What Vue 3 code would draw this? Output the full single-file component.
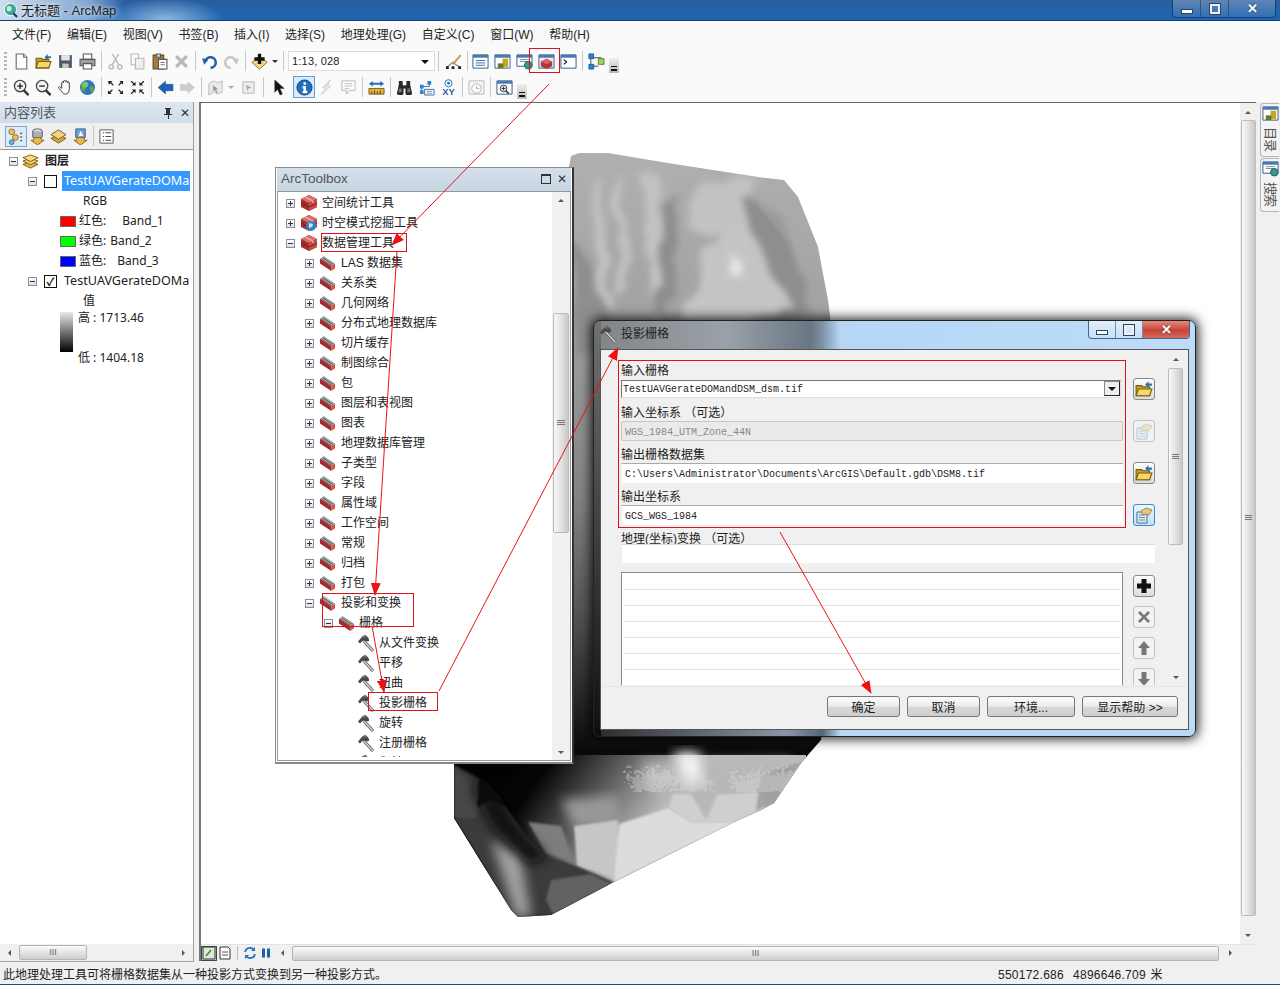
<script setup>
const toolbarOne = [
  { i: 'new', w: 22 }, { i: 'open', w: 22 }, { i: 'save', w: 22 }, { i: 'print', w: 22 }, { sep: 1 },
  { i: 'cut', w: 22, dim: 1 }, { i: 'copy', w: 22, dim: 1 }, { i: 'paste', w: 22 }, { i: 'del', w: 22, dim: 1 }, { sep: 1 },
  { i: 'undo', w: 22 }, { i: 'redo', w: 22, dim: 1 }, { sep: 1 },
  { i: 'add', w: 22 }, { dd: 1 }, { sep: 1 },
  { combo: '1:13, 028' }, { sep: 1 },
  { i: 'editor', w: 24 }, { sep: 1, w: 4 },
  { i: 'toc', w: 22 }, { i: 'catalog', w: 22 }, { i: 'search', w: 22 }, { i: 'toolbox', w: 22 }, { i: 'python', w: 22 }, { sep: 1 },
  { i: 'model', w: 22 }
]

const toolbarTwo = [
  { i: 'zoomin', w: 22 }, { i: 'zoomout', w: 22 }, { i: 'pan', w: 22 }, { i: 'globe', w: 22 }, { sep: 1 },
  { i: 'fixin', w: 22 }, { i: 'fixout', w: 22 }, { sep: 1 },
  { i: 'back', w: 22 }, { i: 'forward', w: 22, dim: 1 }, { sep: 1 },
  { i: 'select', w: 22, dim: 1 }, { dd: 1, dim: 1 }, { i: 'clear', w: 24, dim: 1 }, { sep: 1 },
  { i: 'pointer', w: 27 }, { i: 'identify', w: 22, on: 1 }, { i: 'bolt', w: 22, dim: 1 }, { i: 'html', w: 22, dim: 1 }, { sep: 1 },
  { i: 'measure', w: 22 }, { sep: 1 },
  { i: 'binoc', w: 22 }, { i: 'route', w: 22 }, { i: 'xy', w: 22 }, { sep: 1 },
  { i: 'clock', w: 22, dim: 1 }, { sep: 1 },
  { i: 'viewer', w: 22 }
]

const menus = ['文件(F)', '编辑(E)', '视图(V)', '书签(B)', '插入(I)', '选择(S)', '地理处理(G)', '自定义(C)', '窗口(W)', '帮助(H)']

const indent = [8, 27, 46, 80]
const toolRows = [
  { t: '空间统计工具', l: 0, x: '+' },
  { t: '时空模式挖掘工具', l: 0, x: '+', globe: 1 },
  { t: '数据管理工具', l: 0, x: '-' },
  ...['LAS 数据集', '关系类', '几何网络', '分布式地理数据库', '切片缓存', '制图综合', '包', '图层和表视图', '图表', '地理数据库管理', '子类型', '字段', '属性域', '工作空间', '常规', '归档', '打包']
    .map(t => ({ t, l: 1, x: '+' })),
  { t: '投影和变换', l: 1, x: '-' },
  { t: '栅格', l: 2, x: '-' },
  ...['从文件变换', '平移', '扭曲', '投影栅格', '旋转', '注册栅格', '翻转'].map(t => ({ t, l: 3 }))
]

const fields = [
  { label: '输入栅格', value: 'TestUAVGerateDOMandDSM_dsm.tif', kind: 'dropdown', btn: 'open' },
  { label: '输入坐标系 （可选）', value: 'WGS_1984_UTM_Zone_44N', kind: 'off', btn: 'sref', btnOff: 1 },
  { label: '输出栅格数据集', value: 'C:\\Users\\Administrator\\Documents\\ArcGIS\\Default.gdb\\DSM8.tif', btn: 'open' },
  { label: '输出坐标系', value: 'GCS_WGS_1984', btn: 'sref', btnOn: 1 }
]

const listButtons = [
  { i: 'plus' },
  { i: 'lx', off: 1 },
  { i: 'up', off: 1 },
  { i: 'down', off: 1 }
]
</script>

<template>
  <div class="app">
    <svg class="defs" width="0" height="0">
      <defs>
        <symbol id="new" viewBox="0 0 16 16"><path d="M3 1h7l3 3v11H3z" fill="#fff" stroke="#666"/><path d="M10 1v3h3" fill="#ddd" stroke="#666"/></symbol>
        <symbol id="open" viewBox="0 0 16 16"><path d="M1 5h5l1 1h6v8H1z" fill="#c9a227" stroke="#7a5c12"/><path d="M3 8h12l-2 6H1z" fill="#f4d868" stroke="#7a5c12"/><path d="M9 4l3-3v2h3v2h-3v2z" fill="#2a6fb5"/></symbol>
        <symbol id="save" viewBox="0 0 16 16"><path d="M2 2h12v12H2z" fill="#4c5a68"/><path d="M4 2h8v5H4z" fill="#e6e6e6"/><path d="M5 10h6v4H5z" fill="#c8c8c8"/></symbol>
        <symbol id="print" viewBox="0 0 16 16"><path d="M4 1h8v5H4z" fill="#fff" stroke="#555"/><path d="M1 6h14v6H1z" fill="#9aa0a6" stroke="#555"/><path d="M4 10h8v5H4z" fill="#fff" stroke="#555"/></symbol>
        <symbol id="cut" viewBox="0 0 16 16"><path d="M5 1l6 10M11 1L5 11" stroke="#666" stroke-width="1.5" fill="none"/><circle cx="4" cy="13" r="2" fill="none" stroke="#666" stroke-width="1.5"/><circle cx="12" cy="13" r="2" fill="none" stroke="#666" stroke-width="1.5"/></symbol>
        <symbol id="copy" viewBox="0 0 16 16"><path d="M2 1h7v10H2z" fill="#fff" stroke="#555"/><path d="M6 5h8v10H6z" fill="#ddd" stroke="#555"/></symbol>
        <symbol id="paste" viewBox="0 0 16 16"><path d="M2 2h10v13H2z" fill="#a87c3c" stroke="#5d431c"/><path d="M5 1h4v3H5z" fill="#ccc" stroke="#555"/><path d="M7 6h8v9H7z" fill="#fff" stroke="#555"/><path d="M9 9h4M9 11h4" stroke="#777"/></symbol>
        <symbol id="del" viewBox="0 0 16 16"><path d="M3 3l10 10M13 3L3 13" stroke="#555" stroke-width="3"/></symbol>
        <symbol id="undo" viewBox="0 0 16 16"><path d="M4 8a5 5 0 1 1 5 6" fill="none" stroke="#1f5fa5" stroke-width="2.4"/><path d="M1 5l6 1-4 5z" fill="#1f5fa5"/></symbol>
        <symbol id="redo" viewBox="0 0 16 16"><path d="M12 8a5 5 0 1 0-5 6" fill="none" stroke="#777" stroke-width="2.4"/><path d="M15 5l-6 1 4 5z" fill="#777"/></symbol>
        <symbol id="add" viewBox="0 0 20 20"><path d="M10 4l9 7-9 8-9-8z" fill="#f2d57e" stroke="#8d6a16"/><path d="M8 1h4v4h4v4h-4v4H8V9H4V5h4z" fill="#111"/></symbol>
        <symbol id="editor" viewBox="0 0 18 18"><path d="M2 15l6-5 8 5" fill="none" stroke="#555"/><path d="M1 14h3v3H1zM7 14h3v3H7zM14 14h3v3h-3z" fill="#222"/><path d="M9 10l7-8 1 1-7 8-2 1z" fill="#e7b75a" stroke="#8a6a2a" stroke-width=".6"/></symbol>
        <symbol id="toc" viewBox="0 0 18 18"><path d="M1 2h16v14H1z" fill="#fff" stroke="#2f5a8c"/><path d="M1 2h16v3H1z" fill="#4a7ab0"/><path d="M4 8h10M4 10.5h10M4 13h10" stroke="#2f6fb5"/></symbol>
        <symbol id="catalog" viewBox="0 0 18 18"><path d="M1 2h16v14H1z" fill="#fff" stroke="#2f5a8c"/><path d="M1 2h16v3H1z" fill="#4a7ab0"/><path d="M9 6h6v9H9z" fill="#c9a81f"/><path d="M4 11h6v5H4z" fill="#5d7d2a"/></symbol>
        <symbol id="search" viewBox="0 0 18 18"><path d="M1 2h16v12H1z" fill="#fff" stroke="#2f5a8c"/><path d="M1 2h16v3H1z" fill="#4a7ab0"/><path d="M4 7h10M4 9h10" stroke="#888"/><circle cx="13" cy="13" r="4" fill="#3a9a8a" stroke="#1f5f6a"/></symbol>
        <symbol id="toolbox" viewBox="0 0 18 18"><path d="M1 2h16v14H1z" fill="#eee" stroke="#2f5a8c"/><path d="M1 2h16v3H1z" fill="#4a7ab0"/><path d="M3 9l6-3 6 3v5l-6 3-6-3z" fill="#b5333a"/><path d="M3 9l6 3 6-3-6-3z" fill="#d9646a"/></symbol>
        <symbol id="python" viewBox="0 0 18 18"><path d="M1 2h16v14H1z" fill="#fff" stroke="#2f5a8c"/><path d="M1 2h16v3H1z" fill="#4a7ab0"/><path d="M4 7l3 2.5L4 12" fill="none" stroke="#111" stroke-width="1.2"/></symbol>
        <symbol id="model" viewBox="0 0 18 18"><path d="M3 5v9M3 5h11M3 14h8" stroke="#444"/><path d="M1 1h5v5H1zM1 12h5v5H1z" fill="#2f86d0" stroke="#1f5a96"/><path d="M11 6h6v6h-6z" fill="#9bd36a" stroke="#567f2e"/></symbol>
        <symbol id="zoomin" viewBox="0 0 18 18"><circle cx="7.5" cy="7.5" r="6" fill="#eef3f7" stroke="#444" stroke-width="1.4"/><path d="M11.5 12l5 5" stroke="#333" stroke-width="2.6"/><path d="M4.5 7.5h6M7.5 4.5v6" stroke="#222" stroke-width="1.4"/></symbol>
        <symbol id="zoomout" viewBox="0 0 18 18"><circle cx="7.5" cy="7.5" r="6" fill="#eef3f7" stroke="#444" stroke-width="1.4"/><path d="M11.5 12l5 5" stroke="#333" stroke-width="2.6"/><path d="M4.5 7.5h6" stroke="#222" stroke-width="1.4"/></symbol>
        <symbol id="pan" viewBox="0 0 18 18"><path d="M5 10V4a1 1 0 0 1 2 0V2.500a1 1 0 0 1 2 0V3a1 1 0 0 1 2 0v1a1 1 0 0 1 2 0v7c0 3-2 5-4 5s-3-1-4-3l-3-3c-1-1 0-2 1-2z" fill="#fff" stroke="#333"/></symbol>
        <symbol id="globe" viewBox="0 0 18 18"><circle cx="9" cy="9" r="8" fill="#2f74bb"/><path d="M4 4c3-2 5-1 6 1s-2 3-3 5-1 5-3 3-3-7 0-9zM12 8c2-1 4 0 4 2s-2 5-3 4-2-5-1-6z" fill="#5ea84a"/><circle cx="6.500" cy="6" r="3" fill="#fff" opacity=".25"/></symbol>
        <symbol id="fixin" viewBox="0 0 18 18"><path d="M1 2l5 0-1.500 1.500L7 6v1H6L3.500 4.500 2 6zM17 2v4l-1.500-1.500L13 7h-1V6l2.500-2.500L13 2zM1 16v-4l1.500 1.500L5 11h1v1l-2.500 2.500L5 16zM17 16h-4l1.500-1.500L12 12v-1h1l2.500 2.500L17 12z" fill="#222"/></symbol>
        <symbol id="fixout" viewBox="0 0 18 18"><path d="M7 7H3l1.500-1.500L2 3V2h1l2.500 2.500L7 3zM11 7V3l1.500 1.500L15 2h1v1l-2.500 2.500L15 7zM7 11v4l-1.500-1.500L3 16H2v-1l2.500-2.500L3 11zM11 11h4l-1.500 1.500L16 15v1h-1l-2.500-2.500L11 15z" fill="#222"/></symbol>
        <symbol id="back" viewBox="0 0 16 16"><path d="M1 8l7-6v3h7v6H8v3z" fill="#1f62b8" stroke="#14478a" stroke-width=".5"/></symbol>
        <symbol id="forward" viewBox="0 0 16 16"><path d="M15 8L8 2v3H1v6h7v3z" fill="#888"/></symbol>
        <symbol id="select" viewBox="0 0 18 18"><path d="M2 5l5-3 4 2 5-2v12l-5 2-4-2-5 3z" fill="#cfd6dc" stroke="#555"/><path d="M6 6l7 5h-3l2 4-2 1-2-4-2 2z" fill="#111" stroke="#fff" stroke-width=".5"/></symbol>
        <symbol id="clear" viewBox="0 0 18 18"><path d="M3 3h12v12H3z" fill="#ddd" stroke="#444"/><path d="M6 6l6 3-3 1-1 3z" fill="#333"/></symbol>
        <symbol id="pointer" viewBox="0 0 18 18"><path d="M4 1l10 9H9.500l2.500 6-2.500 1-2.500-6L4 14z" fill="#111" stroke="#444" stroke-width=".6"/></symbol>
        <symbol id="identify" viewBox="0 0 18 18"><circle cx="9" cy="9" r="8" fill="#1f6fbd" stroke="#0f3f78"/><path d="M8 3.500h2.500v2.500H8zM7 7.500h3.500v5h1.500V15H7v-2.500h1V10H7z" fill="#fff"/></symbol>
        <symbol id="bolt" viewBox="0 0 18 18"><path d="M13 1L5 9l3 1-5 7 10-9-3-1z" fill="#ccc" stroke="#666" stroke-width=".7"/></symbol>
        <symbol id="html" viewBox="0 0 18 18"><path d="M2 2h14v10h-6l-3 4v-4H2z" fill="#fff" stroke="#555"/><path d="M5 5h8M5 7.500h8M5 10h5" stroke="#666"/></symbol>
        <symbol id="measure" viewBox="0 0 18 18"><path d="M1 10h16v6H1z" fill="#e8b43c" stroke="#7a5c12"/><path d="M4 13v3M7 12v4M10 13v3M13 12v4" stroke="#444"/><path d="M1 5l4-3v2h8V2l4 3-4 3V6H5v2z" fill="#1f6fbd"/></symbol>
        <symbol id="binoc" viewBox="0 0 18 18"><path d="M3 2h4v4l1 1h2l1-1V2h4v4l2 9a2 2 0 0 1-2 2h-3a2 2 0 0 1-2-2v-5H8v5a2 2 0 0 1-2 2H3a2 2 0 0 1-2-2l2-9z" fill="#2a2a2a"/><path d="M3 10h3v4H3zM12 10h3v4h-3z" fill="#777"/></symbol>
        <symbol id="route" viewBox="0 0 18 18"><path d="M4 13V8h8V4" fill="none" stroke="#2f6fb5"/><path d="M7 11h10v6H7z" fill="#fff" stroke="#2f6fb5"/><path d="M2 12h4v4H2zM10 2h4v4h-4zM2 6h4v4H2z" fill="#2f86d0"/><path d="M9 13h6M9 15h6" stroke="#888"/></symbol>
        <symbol id="xy" viewBox="0 0 18 18"><circle cx="9" cy="4.500" r="3.800" fill="none" stroke="#1f6fbd"/><circle cx="9" cy="4.500" r="1.500" fill="#1f6fbd"/><text x="9" y="16.500" text-anchor="middle" font-size="10" font-weight="700" font-family="Liberation Sans" fill="#1f5fa5">XY</text></symbol>
        <symbol id="clock" viewBox="0 0 18 18"><path d="M1 2h16v14H1z" fill="#eee" stroke="#555"/><circle cx="9" cy="10" r="5" fill="#fff" stroke="#444"/><path d="M9 7v3h3" stroke="#444" fill="none"/></symbol>
        <symbol id="viewer" viewBox="0 0 18 18"><path d="M1 2h16v14H1z" fill="#fff" stroke="#2f5a8c"/><path d="M1 2h16v3H1z" fill="#4a7ab0"/><circle cx="8" cy="10" r="3.500" fill="#e9f1f6" stroke="#333"/><path d="M6 10h4M8 8v4" stroke="#222"/><path d="M10.500 12.500l3 3" stroke="#333" stroke-width="1.600"/></symbol>
        <symbol id="hammer" viewBox="0 0 18 18"><path d="M6 6l10 11" stroke="#5f5f5f" stroke-width="3.200"/><path d="M6 6l10 11" stroke="#cfd3cf" stroke-width="1.500"/><path d="M0 7l5-6 3-1 3 3 1 3-3 1-2-1-2 0-3 3z" fill="#4a4a4a"/><path d="M5 2l4 0" stroke="#8a8a8a"/></symbol>
        <symbol id="tbred" viewBox="0 0 18 18"><path d="M1 5l8-4 8 4v8l-8 4-8-4z" fill="#a62c2c"/><path d="M1 5l8-4 8 4-8 4z" fill="#d9706a"/><path d="M9 9v8l8-4V5z" fill="#c84a44"/><path d="M5 3l8 4v2" fill="none" stroke="#f2c8c0"/><path d="M1 9l8 4 8-4" fill="none" stroke="#7a1d1d"/></symbol>
        <symbol id="tbglobe" viewBox="0 0 18 18"><use href="#tbred"/><circle cx="11" cy="12" r="5" fill="#2f86c8"/><path d="M9 9l4 1-1 3-3 1z" fill="#cfe7f5"/></symbol>
        <symbol id="tbgray" viewBox="0 0 18 18"><path d="M1 4l4-3 12 8-4 3z" fill="#a9a9a9"/><path d="M4 3l11 7M2.500 4.500l11 7" stroke="#555"/><path d="M1 4l12 8v5L1 9z" fill="#a52b2b"/><path d="M13 12l4-3v5l-4 3z" fill="#d0524c"/></symbol>
        <symbol id="layers" viewBox="0 0 18 18"><path d="M1 12l8-3 8 3-8 4z" fill="#e3b64a" stroke="#7a5c12"/><path d="M1 8.500l8-3 8 3-8 4z" fill="#f0cc6a" stroke="#7a5c12"/><path d="M1 5l8-3 8 3-8 4z" fill="#f5dc88" stroke="#7a5c12"/></symbol>
        <symbol id="bydraw" viewBox="0 0 18 18"><circle cx="5" cy="4" r="3" fill="#e9c65c" stroke="#8a6a1c"/><circle cx="9" cy="10" r="3" fill="#e9c65c" stroke="#8a6a1c"/><circle cx="5" cy="15" r="2.500" fill="#7fb0d8" stroke="#3d6f9c"/><path d="M15 5v1M15 9v1M15 13v1" stroke="#222" stroke-width="2"/></symbol>
        <symbol id="bysource" viewBox="0 0 18 18"><ellipse cx="9" cy="3.500" rx="5" ry="2.500" fill="#dfe4ea" stroke="#555"/><path d="M4 3.500v6c0 1.500 10 1.500 10 0v-6" fill="#aab3bd" stroke="#555"/><path d="M5 10h8v3h3l-7 5-7-5h3z" fill="#e9b84a" stroke="#8a6a1c"/></symbol>
        <symbol id="byvis" viewBox="0 0 18 18"><path d="M1 11l8-4 8 4-8 5z" fill="#d9a83a" stroke="#7a5c12"/><path d="M1 7l8-5 8 5-8 5z" fill="#eed28a" stroke="#7a5c12"/></symbol>
        <symbol id="bysel" viewBox="0 0 18 18"><path d="M4 1h10v9H4z" fill="#6aa5d6" stroke="#2f5a8c"/><path d="M9 3l3 5-5 1z" fill="#fff"/><path d="M5 10h8v3h3l-7 5-7-5h3z" fill="#e9b84a" stroke="#8a6a1c"/></symbol>
        <symbol id="options" viewBox="0 0 18 18"><path d="M2 2h14v14H2z" fill="#fff" stroke="#555"/><path d="M5 5h1.500M5 9h1.500M5 13h1.500M8 5h6M8 9h6M8 13h6" stroke="#444"/></symbol>
        <symbol id="sref" viewBox="0 0 18 18"><path d="M2 6h10v11H2z" fill="#dbe8f3" stroke="#44708f"/><path d="M4 9h6M4 11.500h6M4 14h6" stroke="#6b8ea8"/><path d="M6 5l5-3 6 2-3 5-4-1-2 1z" fill="#e6c877" stroke="#8a6a2a" stroke-width=".7"/></symbol>
        <symbol id="plus" viewBox="0 0 18 18"><path d="M6.500 2h5v4.500H16v5h-4.500V16h-5v-4.500H2v-5h4.500z" fill="#111"/></symbol>
        <symbol id="lx" viewBox="0 0 18 18"><path d="M4 4l10 10M14 4L4 14" stroke="#777" stroke-width="2.600"/></symbol>
        <symbol id="up" viewBox="0 0 18 18"><path d="M9 2l6 7h-3.500v7h-5V9H3z" fill="#777"/></symbol>
        <symbol id="down" viewBox="0 0 18 18"><path d="M9 16l6-7h-3.500V2h-5v7H3z" fill="#777"/></symbol>
        <symbol id="rect" viewBox="0 0 14 14"><path d="M1 1h12v12H1z" fill="#dfe8d4" stroke="#333"/><path d="M4 10l5-6" stroke="#3a8a3a" stroke-width="1.500"/></symbol>
        <symbol id="page" viewBox="0 0 14 14"><path d="M2 1h8l2 2v10H2z" fill="#fff" stroke="#333"/><path d="M4 6h6M4 9h6" stroke="#555"/></symbol>
        <symbol id="refresh" viewBox="0 0 14 14"><path d="M2 6a5 5 0 0 1 9-2M12 8a5 5 0 0 1-9 2" fill="none" stroke="#1f6fbd" stroke-width="1.600"/><path d="M12 1v4H8zM2 13V9h4z" fill="#1f6fbd"/></symbol>
        <symbol id="pause" viewBox="0 0 14 14"><path d="M3 2.500h3v9H3zM8 2.500h3v9H8z" fill="#1f5fa5"/></symbol>
        <symbol id="logo" viewBox="0 0 16 16"><circle cx="8" cy="7" r="6.500" fill="#3aa5a0" stroke="#fff"/><path d="M4 4c3-2 6 0 5 3s-4 2-5 1z" fill="#cfeac4"/><path d="M11 11l4 4" stroke="#333" stroke-width="2.200"/></symbol>
        <symbol id="pin" viewBox="0 0 12 12"><path d="M3 1h6v1H8v5h2v1H7v4H6V8H2V7h2V2H3z" fill="#333"/></symbol>
      </defs>
    </svg>

    <header class="titlebar">
      <svg class="logo"><use href="#logo" /></svg>
      <span class="title-text">无标题 - ArcMap</span>
      <div class="caption">
        <span class="cap cap-min"><i></i></span>
        <span class="cap cap-max"><i></i></span>
        <span class="cap cap-close">✕</span>
      </div>
    </header>

    <nav class="menubar">
      <span v-for="m in menus" :key="m">{{ m }}</span>
    </nav>

    <div class="toolbars">
      <div class="toolbar" v-for="(bar, n) in [toolbarOne, toolbarTwo]" :key="n">
        <span class="grip"></span>
        <template v-for="(b, k) in bar" :key="k">
          <span v-if="b.sep" class="sep" :style="b.w ? { width: b.w + 'px' } : null"></span>
          <span v-else-if="b.dd" class="dd" :class="{ dim: b.dim }"></span>
          <span v-else-if="b.combo" class="combo">{{ b.combo }}<i class="tri-down"></i></span>
          <span v-else class="tbtn" :class="{ dim: b.dim, on: b.on }" :style="{ width: b.w + 'px' }">
            <svg class="ic"><use :href="'#' + b.i" /></svg>
          </span>
        </template>
        <span class="more"><i></i></span>
      </div>
    </div>

    <div class="main">
      <aside class="toc">
        <div class="pane-head">
          <span>内容列表</span>
          <span class="pane-btns"><svg class="pin"><use href="#pin" /></svg><b>✕</b></span>
        </div>
        <div class="toc-tools">
          <span class="ttool on"><svg class="ic"><use href="#bydraw" /></svg></span>
          <span class="ttool"><svg class="ic"><use href="#bysource" /></svg></span>
          <span class="ttool"><svg class="ic"><use href="#byvis" /></svg></span>
          <span class="ttool"><svg class="ic"><use href="#bysel" /></svg></span>
          <span class="tsep"></span>
          <span class="ttool"><svg class="ic"><use href="#options" /></svg></span>
        </div>
        <div class="toc-tree">
          <div class="tr"><i class="exp minus l0"></i><svg class="ic lay"><use href="#layers" /></svg><b>图层</b></div>
          <div class="tr"><i class="exp minus l1"></i><i class="chk"></i><span class="hl">TestUAVGerateDOMa</span></div>
          <div class="tr sub">RGB</div>
          <div class="tr band"><i class="swatch" style="background:#f00"></i><span class="bl">红色:</span><span style="margin-left:16px">Band_1</span></div>
          <div class="tr band"><i class="swatch" style="background:#0f0"></i><span class="bl">绿色:</span><span style="margin-left:4px">Band_2</span></div>
          <div class="tr band"><i class="swatch" style="background:#00f"></i><span class="bl">蓝色:</span><span style="margin-left:11px">Band_3</span></div>
          <div class="tr"><i class="exp minus l1"></i><i class="chk">✓</i><span class="plain">TestUAVGerateDOMa</span></div>
          <div class="tr sub">值</div>
          <div class="ramp-row">
            <i class="ramp"></i>
            <div class="ramp-labels"><span>高 : 1713.46</span><span>低 : 1404.18</span></div>
          </div>
        </div>
        <div class="hbar toc-hbar">
          <i class="tri-left"></i>
          <span class="thumb-h" style="width:68px"><i>III</i></span>
          <span class="fill"></span>
          <i class="tri-right"></i>
        </div>
      </aside>

      <section class="mapframe">
        <div class="mapbody">
          <div class="canvas">
            <svg class="terrain" width="1040" height="841" viewBox="200 103 1040 841">
              <defs>
                <clipPath id="dem"><path d="M570 156L578 153H607L667 163L757 177L783 180L797 197L817 247L827 300L832 340L834 600L820 740L800 763L773 803L760 810L733 822L613 882L550 915L517 917L510 910L453 818V765z" /></clipPath>
                <filter id="soft" x="-20%" y="-20%" width="140%" height="140%"><feGaussianBlur stdDeviation="6" /></filter>
                <filter id="edge" x="-5%" y="-5%" width="110%" height="110%"><feGaussianBlur stdDeviation=".9" /></filter>
                <filter id="rough" x="-10%" y="-10%" width="120%" height="120%">
                  <feTurbulence type="fractalNoise" baseFrequency="0.03" numOctaves="3" seed="4" result="n" />
                  <feDisplacementMap in="SourceGraphic" in2="n" scale="22" />
                  <feGaussianBlur stdDeviation="3.500" />
                </filter>
                <filter id="speck" x="0" y="0" width="100%" height="100%">
                  <feTurbulence type="turbulence" baseFrequency="0.2" numOctaves="2" seed="9" result="n" />
                  <feDisplacementMap in="SourceGraphic" in2="n" scale="26" />
                </filter>
                <linearGradient id="demg" x1="0" y1="0" x2="0" y2="1">
                  <stop offset="0" stop-color="#b0b0b0" />
                  <stop offset=".22" stop-color="#a2a2a2" />
                  <stop offset=".45" stop-color="#848484" />
                  <stop offset=".6" stop-color="#555" />
                  <stop offset=".78" stop-color="#0a0a0a" />
                  <stop offset="1" stop-color="#111" />
                </linearGradient>
                <linearGradient id="mid" gradientUnits="userSpaceOnUse" x1="555" y1="755" x2="650" y2="825">
                  <stop offset="0" stop-color="#050505" />
                  <stop offset=".45" stop-color="#555" />
                  <stop offset="1" stop-color="#bbb" />
                </linearGradient>
              </defs>
              <g clip-path="url(#dem)">
                <rect x="440" y="150" width="400" height="770" fill="url(#demg)" />
                <g filter="url(#rough)">
                  <path d="M596 170l14 130-10 10-10-130zM620 172l10 120-10 10-8-120zM640 175l20 0 6 130-14 20zM690 180l70 0-10 45-60 10z" fill="#c2c2c2" />
                  <path d="M575 240l18 30 20 70-44 20zM672 185l8 60 -16 70 -14 0 10-80zM745 200l34 12 36 110-46 0z" fill="#8e8e8e" />
                  <path d="M720 225l30 0 20 50 20 30-60 20-50-10 20-50zM690 290l70 20-30 30-60 0z" fill="#c4c4c4" />
                  <path d="M732 255l12 12-4 14-12-10z" fill="#e6e6e6" />
                </g>
                <path d="M748 178L783 180L797 197L817 247L785 240L760 210z" fill="#aaa" opacity=".4" filter="url(#edge)" />
                <rect x="445" y="755" width="360" height="130" fill="url(#mid)" />
                <path d="M640 763L790 760L785 790L745 812L700 815L670 800L650 790z" fill="#b8b8b8" filter="url(#soft)" />
                <path d="M672 752L698 752L702 780L686 786z" fill="#f2f2f2" filter="url(#soft)" />
                <path d="M527 822L560 826L573 862L545 853z" fill="#7d7d7d" filter="url(#edge)" />
                <path d="M560 800L617 796L618 826L573 828z" fill="#999" filter="url(#soft)" />
                <path d="M573 826L617 820L620 880L576 866z" fill="#c6c6c6" filter="url(#edge)" />
                <path d="M618 824L668 808L690 822L735 822L613 882z" fill="#dcdcdc" filter="url(#edge)" />
                <path d="M690 794L705 820L716 795L760 792L765 808L735 822H690L668 808L672 794z" fill="#cfcfcf" filter="url(#edge)" />
                <path d="M760 775L800 762L773 803L755 811z" fill="#9a9a9a" opacity=".8" filter="url(#edge)" />
                <path d="M453 818L490 800L505 808L525 835L545 855L575 866L613 882L550 915L517 917L510 910z" fill="#3a3a3a" filter="url(#edge)" />
                <path d="M490 840L520 855L530 917H515z" fill="#a0a0a0" filter="url(#soft)" />
                <path d="M550 880L590 874L610 884L552 914L545 900z" fill="#626262" filter="url(#edge)" />
                <path d="M453 765L478 778L476 818L453 818z" fill="#474747" filter="url(#edge)" />
                <path d="M476 772L500 798L525 835L548 858L527 864L490 826L472 790z" fill="#0c0c0c" filter="url(#soft)" opacity=".9" />
                <path d="M453 755L540 755L500 780L465 770z" fill="#000" filter="url(#soft)" />
                <path d="M620 768c30-6 60-2 86 6l-6 12c-26-8-50-6-72 6zM722 772c24-8 56-8 78-6l-14 18-54 6z" fill="#e2e2e2" opacity=".35" filter="url(#speck)" />
              </g>
            </svg>
          </div>
          <div class="vbar map-vbar">
            <i class="tri-up"></i>
            <span class="thumb-v map-thumb"></span>
            <i class="tri-down small"></i>
          </div>
        </div>
        <div class="hbar map-hbar">
          <span class="mbtn on"><svg class="ic14"><use href="#rect" /></svg></span>
          <span class="mbtn"><svg class="ic14"><use href="#page" /></svg></span>
          <span class="mdiv"></span>
          <span class="mbtn"><svg class="ic14"><use href="#refresh" /></svg></span>
          <span class="mbtn"><svg class="ic14"><use href="#pause" /></svg></span>
          <i class="tri-left"></i>
          <span class="thumb-h map-hthumb"><i>III</i></span>
          <i class="tri-right"></i>
        </div>
      </section>

      <div class="sidetabs">
        <div class="stab">
          <svg class="ic"><use href="#catalog" /></svg>
          <span>目录</span>
        </div>
        <div class="stab">
          <svg class="ic"><use href="#search" /></svg>
          <span>搜索</span>
        </div>
      </div>
    </div>

    <footer class="status">
      <span>此地理处理工具可将栅格数据集从一种投影方式变换到另一种投影方式。</span>
      <span class="coords">550172.686&nbsp; 4896646.709 米</span>
    </footer>

    <div class="arctoolbox">
      <div class="atb-head">
        <span>ArcToolbox</span>
        <span class="atb-btns"><i class="atb-max"></i><b>✕</b></span>
      </div>
      <div class="atb-body">
        <div class="atb-tree">
          <div v-for="r in toolRows" :key="r.t" class="arow" :class="'lv' + r.l" :style="{ paddingLeft: indent[r.l] + 'px' }">
            <i v-if="r.x" class="exp" :class="r.x === '+' ? 'plus' : 'minus'"></i>
            <svg class="ic tico"><use :href="r.l === 3 ? '#hammer' : r.l === 0 ? (r.globe ? '#tbglobe' : '#tbred') : '#tbgray'" /></svg>
            <span>{{ r.t }}</span>
          </div>
        </div>
        <div class="vbar atb-vbar">
          <i class="tri-up"></i>
          <span class="thumb-v atb-thumb"></span>
          <i class="tri-down small"></i>
        </div>
      </div>
    </div>

    <div class="dialog">
      <div class="dlg-head">
        <svg class="ic"><use href="#hammer" /></svg>
        <span>投影栅格</span>
        <div class="caption dlg-cap">
          <span class="cap cap-min"><i></i></span>
          <span class="cap cap-max"><i></i></span>
          <span class="cap cap-close">✕</span>
        </div>
      </div>
      <div class="dlg-body">
        <div class="dlg-main">
          <div class="form">
            <div v-for="f in fields" :key="f.label" class="field">
              <label>{{ f.label }}</label>
              <div class="field-row">
                <div class="input" :class="f.kind">
                  {{ f.value }}
                  <span v-if="f.kind === 'dropdown'" class="combo-btn"><i class="tri-down"></i></span>
                </div>
                <span class="sbtn" :class="{ off: f.btnOff, on: f.btnOn }"><svg class="ic"><use :href="'#' + f.btn" /></svg></span>
              </div>
            </div>
            <label class="geo-label">地理(坐标)变换 （可选）</label>
            <div class="input geo-input"></div>
            <div class="list-row">
              <div class="list"><i v-for="n in 6" :key="n"></i></div>
              <div class="list-btns">
                <span v-for="b in listButtons" :key="b.i" class="sbtn" :class="{ off: b.off }"><svg class="ic"><use :href="'#' + b.i" /></svg></span>
              </div>
            </div>
          </div>
          <div class="vbar dlg-vbar">
            <i class="tri-up"></i>
            <span class="thumb-v dlg-thumb"></span>
            <i class="tri-down small"></i>
          </div>
        </div>
        <div class="dlg-foot">
          <button class="w73">确定</button>
          <button class="w73">取消</button>
          <button class="w88">环境...</button>
          <button class="w96">显示帮助 &gt;&gt;</button>
        </div>
      </div>
    </div>

    <svg class="notes" width="1280" height="985">
      <defs>
        <marker id="head" markerWidth="13" markerHeight="10" refX="12" refY="5" orient="auto" markerUnits="userSpaceOnUse"><path d="M0 0L13 5L0 10z" fill="#ee1111" /></marker>
      </defs>
      <g fill="none" stroke="#d8141e">
        <rect x="529.500" y="48.500" width="30" height="24" />
        <rect x="321.500" y="233.500" width="85" height="18" />
        <rect x="322.500" y="593.500" width="91" height="33" />
        <rect x="368.500" y="692.500" width="69" height="18" />
        <rect x="618.500" y="360.500" width="507" height="167" />
      </g>
      <g stroke="#ee1111" marker-end="url(#head)">
        <line x1="549" y1="84" x2="392" y2="245" />
        <line x1="397" y1="251" x2="375" y2="595" />
        <line x1="372" y1="626" x2="384" y2="692" />
        <line x1="439" y1="691" x2="618" y2="348" />
        <line x1="780" y1="532" x2="871" y2="693" />
      </g>
    </svg>
  </div>
</template>

<style>
html, body { margin: 0; background: #f0f0f0; }
</style>

<style scoped>
.app {
  position: relative;
  width: 1280px;
  height: 985px;
  overflow: hidden;
  background: #f4f4f4;
  font: 12px/1 "Liberation Sans", "Noto Sans CJK SC", sans-serif;
  color: #222;
  display: flex;
  flex-direction: column;
}
.defs { position: absolute; }
i { font-style: normal; display: block; }

/* title */
.titlebar {
  height: 21px;
  flex: none;
  display: flex;
  align-items: center;
  padding-left: 3px;
  box-sizing: border-box;
  border-bottom: 1px solid #17406f;
  background:
    radial-gradient(ellipse 60px 22px at 165px 20px, rgba(190,220,245,.7), transparent),
    linear-gradient(90deg, rgba(235,245,252,.85) 0, rgba(190,215,240,.6) 90px, transparent 125px),
    linear-gradient(180deg, #2a5c9c, #1c66b4);
}
.logo { width: 15px; height: 15px; }
.title-text { margin-left: 3px; color: #222; font-size: 13px; padding-top: 1px; text-shadow: 0 0 4px #fff; }
.caption { margin-left: auto; margin-right: 4px; display: flex; height: 17px; align-self: flex-start; border: 1px solid rgba(20,50,90,.7); border-top: 0; border-radius: 0 0 4px 4px; overflow: hidden; }
.cap { display: flex; align-items: center; justify-content: center; color: #fff; background: linear-gradient(180deg, rgba(255,255,255,.25), rgba(255,255,255,.08)); box-sizing: border-box; border-right: 1px solid rgba(20,50,90,.5); }
.cap-min { width: 28px; }
.cap-min i { width: 10px; height: 3px; background: #fff; border: 1px solid #345; margin-top: 5px; }
.cap-max { width: 28px; }
.cap-max i { width: 6px; height: 6px; border: 2px solid #eef; outline: 1px solid #345; }
.cap-close { width: 46px; border-right: 0; font-size: 13px; font-weight: 700; text-shadow: 0 0 2px #234; }

.menubar {
  height: 27px;
  flex: none;
  display: flex;
  gap: 15.700px;
  align-items: center;
  padding-left: 12px;
  background: #f9f9f9;
  font-size: 12px;
}
.toolbars { flex: none; height: 54px; background: #fafafa; }
.toolbar { height: 26px; display: flex; align-items: center; padding-left: 4px; }
.grip { width: 3px; height: 19px; margin-right: 3px; background: repeating-linear-gradient(180deg, #b5b5b5 0 2px, transparent 2px 4px); }
.sep { width: 6px; height: 20px; flex: none; background: linear-gradient(#c8c8c8, #c8c8c8) center/1px 100% no-repeat; }
.tbtn { height: 22px; display: flex; align-items: center; justify-content: center; flex: none; box-sizing: border-box; }
.tbtn.dim .ic, .dd.dim { opacity: .4; }
.tbtn.on { background: #dcebfa; outline: 1px solid #5f9fdc; outline-offset: -1px; margin-left: 0; }
.ic { width: 17px; height: 17px; display: block; flex: none; }
.ic14 { width: 14px; height: 14px; display: block; }
.dd { width: 10px; height: 22px; position: relative; flex: none; }
.dd::after { content: ""; position: absolute; left: 2px; top: 10px; border: 3px solid transparent; border-top: 3px solid #333; }
.combo {
  width: 147px;
  height: 20px;
  margin-left: 2px;
  box-sizing: border-box;
  border: 1px solid #ddd;
  background: #fff;
  display: flex;
  align-items: center;
  padding-left: 3px;
  font-size: 11px;
  letter-spacing: .2px;
  position: relative;
  flex: none;
}
.combo .tri-down { position: absolute; right: 5px; top: 8px; }
.tri-down { width: 0; height: 0; border: 4px solid transparent; border-top: 4px solid #111; border-bottom: 0; }
.tri-down.small { border-width: 3px 3px 0; border-top-color: #555; }
.tri-up { width: 0; height: 0; border: 3px solid transparent; border-bottom: 3px solid #555; border-top: 0; }
.tri-left { width: 0; height: 0; border: 3px solid transparent; border-right: 3px solid #555; border-left: 0; }
.tri-right { width: 0; height: 0; border: 3px solid transparent; border-left: 3px solid #555; border-right: 0; }
.more { width: 10px; height: 15px; margin: 8px 0 0 2px; background: linear-gradient(#eee, #bbb); position: relative; flex: none; }
.more i { position: absolute; left: 2px; bottom: 2px; width: 6px; height: 4px; border-top: 1px solid #111; background: linear-gradient(#111, #111) center 2px/6px 2px no-repeat; }

.main { height: 860px; flex: none; margin-top: 0; display: flex; background: #f0f0f0; }
.toc { width: 193px; flex: none; display: flex; flex-direction: column; border-right: 1px solid #a0a0a0; box-sizing: content-box; margin-right: 5px; border-bottom: 1px solid #a0a0a0; height: 859px; }
.pane-head { height: 21px; flex: none; background: linear-gradient(#dce6f0, #d0dde9); display: flex; align-items: center; justify-content: space-between; padding: 0 3px 0 4px; color: #555; font-size: 13px; }
.pane-btns { display: flex; gap: 6px; align-items: center; color: #333; font-size: 12px; font-weight: 400; }
.pane-btns b { font-weight: 400; }
.pin { width: 12px; height: 12px; display: block; }
.toc-tools { height: 26px; flex: none; display: flex; align-items: center; padding-left: 5px; background: #f0f0f0; }
.ttool { width: 21.500px; height: 21px; display: flex; align-items: center; justify-content: center; box-sizing: border-box; flex: none; }
.ttool.on { background: #dcebfa; border: 1px solid #6fa7dc; }
.tsep { width: 5px; height: 20px; background: linear-gradient(#c8c8c8, #c8c8c8) center/1px 100% no-repeat; }
.toc-tree { flex: 1; background: #fff; border-top: 1px solid #999; padding-top: 1px; overflow: hidden; }
.tr { height: 20px; display: flex; align-items: center; position: relative; font-family: "Noto Sans", "Noto Sans CJK SC", sans-serif; }
.tr b { font-weight: 700; font-size: 12px; margin-left: 5px; }
.exp { width: 9px; height: 9px; box-sizing: border-box; border: 1px solid #8a8f96; background: linear-gradient(#fff, #dde); position: relative; flex: none; }
.exp::before { content: ""; position: absolute; left: 1px; right: 1px; top: 3px; height: 1px; background: #333; }
.exp.plus::after { content: ""; position: absolute; top: 1px; bottom: 1px; left: 3px; width: 1px; background: #333; }
.exp.l0 { margin-left: 9px; margin-right: 4px; }
.exp.l1 { margin-left: 28px; margin-right: 7px; }
.lay { margin-right: 1px; }
.chk { width: 11px; height: 11px; border: 1px solid #111; background: #fff; color: #111; font-size: 11px; line-height: 11px; text-align: center; font-weight: 700; margin-right: 5px; flex: none; }
.hl { background: #3399ff; color: #fff; width: 128px; height: 20px; display: flex; align-items: center; padding-left: 2px; box-sizing: border-box; font-size: 12.600px; overflow: hidden; white-space: nowrap; }
.plain { padding-left: 2px; font-size: 12.600px; white-space: nowrap; }
.sub { padding-left: 83px; }
.band { padding-left: 60px; }
.swatch { width: 14px; height: 9px; border: 1px solid #666; margin-right: 3px; flex: none; }
.ramp-row { display: flex; padding: 0 0 0 60px; height: 60px; font-family: "Noto Sans", "Noto Sans CJK SC", sans-serif; }
.ramp { width: 13px; height: 40px; margin-top: 1px; background: linear-gradient(#e8e8e8, #000); flex: none; }
.ramp-labels { margin-left: 5px; display: flex; flex-direction: column; justify-content: space-between; height: 52px; padding-top: 1px; }
.hbar { display: flex; align-items: center; height: 17px; flex: none; background: #f0f0f0; box-sizing: border-box; }
.toc-hbar { padding: 0 8px 0 8px; }
.toc-hbar .thumb-h { margin-left: 8px; }
.thumb-h { height: 15px; box-sizing: border-box; border: 1px solid #b4b4b4; border-radius: 2px; background: linear-gradient(#fbfbfb, #e4e4e4 50%, #cfcfcf); color: #666; display: flex; align-items: center; justify-content: center; font-size: 9px; flex: none; }
.fill { flex: 1; }

.mapframe { width: 1057px; flex: none; display: flex; flex-direction: column; height: 859px; border-top: 1px solid #666; border-left: 2px solid #777; box-sizing: border-box; margin-left: 0; }
.mapbody { flex: 1; display: flex; min-height: 0; }
.canvas { flex: 1; background: #fff; overflow: hidden; }
.terrain { display: block; }
.vbar { width: 16px; flex: none; background: #f0f0f0; display: flex; flex-direction: column; align-items: center; padding: 8px 0; box-sizing: border-box; }
.vbar .tri-down { margin-top: auto; }
.thumb-v { width: 15px; box-sizing: border-box; border: 1px solid #bbb; border-radius: 2px; background: linear-gradient(90deg, #f8f8f8, #e2e2e2 50%, #c8c8c8); position: relative; flex: none; }
.thumb-v::after { content: ""; position: absolute; left: 3px; right: 3px; top: calc(50% - 3px); height: 5px; background: repeating-linear-gradient(180deg, #777 0 1px, transparent 1px 2px); }
.map-vbar { padding-bottom: 7px; }
.map-thumb { height: 796px; margin-top: 6px; }
.map-hbar { padding-left: 0; height: 17px; border-top: 1px solid #e2e2e2; }
.mbtn { width: 16px; height: 15px; display: flex; align-items: center; justify-content: center; box-sizing: border-box; flex: none; }
.mbtn.on { border: 1px solid #444; background: #d8ddd0; }
.mdiv { width: 1px; height: 14px; margin: 0 4px 0 3px; background: #bbb; flex: none; }
.map-hbar .mbtn + .mbtn { margin-right: 1px; }
.map-hbar .tri-left { margin: 0 8px 0 6px; }
.map-hthumb { width: 927px; }
.map-hbar .tri-right { margin-left: 10px; }

.sidetabs { flex: none; width: 22px; padding-left: 3px; box-sizing: border-box; margin-left: 1px; display: flex; flex-direction: column; gap: 1px; padding-top: 1px; }
.stab { height: 51px; border: 1px solid #b5b5b5; border-right: 0; border-radius: 4px 0 0 4px; background: #f4f4f4; display: flex; flex-direction: column; align-items: center; color: #555; padding-top: 1px; }
.stab span { writing-mode: vertical-rl; text-orientation: sideways; font-size: 13px; margin-top: 5px; letter-spacing: -1px; }

.status { flex: none; height: 23px; background: #f0f0f0; display: flex; align-items: center; padding: 3px 0 0 3px; border-bottom: 1px solid #1f4f80; box-sizing: border-box; }
.coords { position: absolute; left: 998px; letter-spacing: .25px; word-spacing: 1px; }

/* windows floating over the map */
.arctoolbox {
  position: absolute;
  left: 275px;
  top: 167px;
  width: 299px;
  height: 597px;
  box-sizing: border-box;
  background: #fff;
  border: 1px solid #8a8a8a;
  border-right: 2px solid #333;
  border-bottom: 2px solid #888;
  padding: 0 1px 1px 1px;
  display: flex;
  flex-direction: column;
}
.atb-head { height: 23px; flex: none; background: linear-gradient(#d4e0eb, #c6d5e3); display: flex; align-items: center; justify-content: space-between; padding: 0 4px 2px 4px; box-sizing: border-box; color: #555; font-size: 13.500px; }
.atb-btns { display: flex; align-items: center; gap: 6px; color: #333; }
.atb-btns b { font-weight: 400; font-size: 12px; }
.atb-max { width: 8px; height: 7px; border: 1px solid #333; border-top-width: 2px; }
.atb-body { flex: 1; display: flex; min-height: 0; border: 1px solid #999; }
.atb-tree { flex: 1; overflow: hidden; margin-bottom: 3px; padding-top: 1px; }
.arow { height: 20px; display: flex; align-items: center; box-sizing: border-box; white-space: nowrap; font-family: "Liberation Sans", "Noto Sans CJK SC", sans-serif; }
.arow .exp { margin-right: 5px; }
.arow.lv0 .tico { width: 18px; height: 18px; margin-right: 4px; }
.arow.lv1 .tico { width: 17px; height: 17px; margin-right: 5px; }
.arow.lv2 .tico, .arow.lv3 .tico { width: 17px; height: 17px; margin-right: 4px; }
.atb-vbar { padding: 7px 0 6px; background: #f1f1f1; width: 18px; }
.atb-thumb { height: 220px; margin-top: 111px; width: 16px; }

.dialog {
  position: absolute;
  left: 593px;
  top: 320px;
  width: 603px;
  height: 417px;
  box-sizing: border-box;
  border-radius: 7px;
  border: 1px solid #222;
  padding: 0 6px 6px 6px;
  box-shadow: 0 0 12px 2px rgba(0,0,0,.85);
  display: flex;
  flex-direction: column;
  background:
    linear-gradient(180deg, rgba(110,110,110,.9), rgba(10,10,10,.95)) left top/7px 100% no-repeat,
    linear-gradient(90deg, #2a2a2a 0, #8a97a6 32%, #566678 38%, #b9d7f4 41%) left bottom/100% 8px no-repeat,
    linear-gradient(90deg, #7f8488 0, #9aa1a8 22%, #697684 36%, #7e92a8 38%, #b6d6f6 41%, #bcdcf8 100%);
}
.dlg-head { height: 28px; flex: none; display: flex; align-items: center; gap: 4px; color: #222; position: relative; padding-bottom: 2px; box-sizing: border-box; }
.dlg-cap { position: absolute; right: -1px; top: 0; margin: 0; }
.dlg-cap .cap-min, .dlg-cap .cap-max { width: 27px; background: linear-gradient(rgba(255,255,255,.55), rgba(255,255,255,.15)); }
.dlg-cap .cap-close { background: linear-gradient(#e8877a, #c9433a 55%, #d26a5e); }
.dlg-body { flex: 1; min-height: 0; border: 1px solid #555; background: #f0f0f0; display: flex; flex-direction: column; }
.dlg-main { flex: 1; min-height: 0; display: flex; overflow: hidden; }
.form { width: 546px; flex: none; padding: 10px 0 0 20px; box-sizing: content-box; height: 330px; font-family: "Liberation Sans", "Noto Sans CJK SC", sans-serif; }
.field { height: 42px; }
label { display: block; height: 18px; line-height: 22px; color: #222; }
.field-row { display: flex; margin-top: 1px; }
.input {
  width: 502px;
  height: 20px;
  box-sizing: border-box;
  background: #fff;
  border-top: 1px solid #aaa;
  border-left: 1px solid #eee;
  padding-left: 3px;
  font: 10px/21px "Liberation Mono", monospace;
  color: #222;
  position: relative;
  white-space: nowrap;
  flex: none;
}
.input.dropdown { border: 1px solid #777; border-bottom-color: #ddd; border-right-color: #ddd; width: 500px; height: 18px; margin: 1px 2px 0 0; padding-left: 1px; line-height: 18px; }
.input.off { background: #eaeaea; border: 1px solid #c8c8c8; border-radius: 2px; color: #888; }
.combo-btn { position: absolute; right: 0; top: 0; width: 16px; height: 15px; background: #eee; border: 1px solid #888; border-right-color: #222; border-bottom-color: #222; display: flex; align-items: center; justify-content: center; box-sizing: border-box; }
.sbtn { width: 22px; height: 22px; margin-left: 10px; margin-top: -1px; box-sizing: border-box; border: 1px solid #888; border-radius: 3px; background: linear-gradient(#fbfbfb, #dcdcdc); display: flex; align-items: center; justify-content: center; flex: none; }
.sbtn.off { border-color: #c4c4c4; background: #f2f2f2; }
.field .sbtn.off .ic { opacity: .35; }
.sbtn.on { border-color: #3d8fc5; background: linear-gradient(#e8f6fd, #bfe3f7); }
.sbtn .ic { width: 18px; height: 18px; }
.geo-label { height: 16px; line-height: 22px; overflow: visible; }
.geo-input { width: 534px; height: 19px; border-top: 1px solid #ddd; }
.list-row { display: flex; margin-top: 9px; align-items: flex-start; }
.list { width: 502px; height: 113px; box-sizing: border-box; border: 1px solid #888; border-bottom: 0; background: #fff; padding-top: 16px; flex: none; overflow: hidden; }
.list i { height: 1px; background: #e4e4e4; margin: 0 2px 15px; }
.list-btns { height: 113px; overflow: hidden; display: flex; flex-direction: column; gap: 9px; padding-top: 3px; box-sizing: border-box; }
.list-btns .sbtn { margin-top: 0; }
.dlg-vbar { width: 17px; padding: 8px 0 7px; }
.dlg-thumb { height: 177px; margin-top: 7px; }
.dlg-foot { height: 43px; flex: none; border-top: 1px solid #e6e6e6; display: flex; justify-content: flex-end; gap: 7px; padding: 9px 10px 0 0; box-sizing: border-box; }
button { height: 21px; box-sizing: border-box; border: 1px solid #777; border-radius: 3px; background: linear-gradient(#fbfbfb, #ededed 48%, #d8d8d8 52%, #cfcfcf); font: 12px "Liberation Sans", "Noto Sans CJK SC", sans-serif; color: #222; padding: 0; }
.w73 { width: 73px; }
.w88 { width: 88px; }
.w96 { width: 96px; }

.notes { position: absolute; left: 0; top: 0; pointer-events: none; }
</style>
